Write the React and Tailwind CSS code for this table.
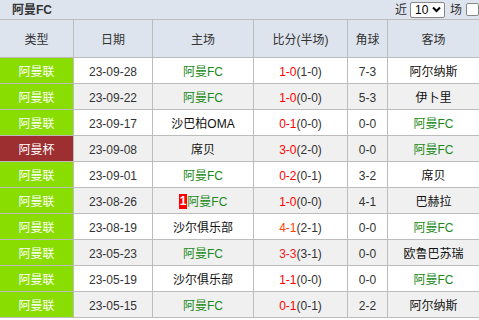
import React from "react";

const rows = [
  { type: "阿曼联", cup: false, date: "23-09-28", home: "阿曼FC", hg: true, s: "1-0", sc: "text-[#ff0000]", ht: "(1-0)", c: "7-3", away: "阿尔纳斯", ag: false },
  { type: "阿曼联", cup: false, date: "23-09-22", home: "阿曼FC", hg: true, s: "1-0", sc: "text-[#ff0000]", ht: "(0-0)", c: "5-3", away: "伊卜里", ag: false },
  { type: "阿曼联", cup: false, date: "23-09-17", home: "沙巴柏OMA", hg: false, s: "0-1", sc: "text-[#ff0000]", ht: "(0-0)", c: "0-0", away: "阿曼FC", ag: true },
  { type: "阿曼杯", cup: true, date: "23-09-08", home: "席贝", hg: false, s: "3-0", sc: "text-[#ff0000]", ht: "(2-0)", c: "0-0", away: "阿曼FC", ag: true },
  { type: "阿曼联", cup: false, date: "23-09-01", home: "阿曼FC", hg: true, s: "0-2", sc: "text-[#ff0000]", ht: "(0-1)", c: "3-2", away: "席贝", ag: false },
  { type: "阿曼联", cup: false, date: "23-08-26", home: "阿曼FC", hg: true, badge: true, s: "1-0", sc: "text-[#ff0000]", ht: "(0-0)", c: "4-1", away: "巴赫拉", ag: false },
  { type: "阿曼联", cup: false, date: "23-08-19", home: "沙尔俱乐部", hg: false, s: "4-1", sc: "text-[#ff4400]", ht: "(2-1)", c: "0-0", away: "阿曼FC", ag: true },
  { type: "阿曼联", cup: false, date: "23-05-23", home: "阿曼FC", hg: true, s: "3-3", sc: "text-[#ee2222]", ht: "(3-1)", c: "0-0", away: "欧鲁巴苏瑞", ag: false },
  { type: "阿曼联", cup: false, date: "23-05-19", home: "沙尔俱乐部", hg: false, s: "1-1", sc: "text-[#ff0000]", ht: "(0-0)", c: "0-0", away: "阿曼FC", ag: true },
  { type: "阿曼联", cup: false, date: "23-05-15", home: "阿曼FC", hg: true, s: "0-1", sc: "text-[#ff0000]", ht: "(0-1)", c: "2-2", away: "阿尔纳斯", ag: false },
];

const font = { fontFamily: '"Liberation Sans", "Noto Sans CJK SC", sans-serif' };

export default function App() {
  return (
    <div className="w-[479px] h-[320px] overflow-hidden bg-white text-[12px] text-[#333]" style={font}>
      <div className="h-[20px] bg-[#dde4ee] border-b border-[#bcbcbc] flex items-center justify-between">
        <span className="pl-[12px] font-bold text-[12px] text-[#333]">阿曼FC</span>
        <div className="flex items-center h-full">
          <span className="mr-[3px]">近</span>
          <div className="w-[35px] h-[16px] border border-[#888] rounded-[2px] bg-white flex items-center justify-between pl-[4px] pr-[3px] text-[#000]">
            <span>10</span>
            <svg width="9" height="7" viewBox="0 0 9 7"><path d="M1 1.5 L4.5 5 L8 1.5" stroke="#000" strokeWidth="2" fill="none" /></svg>
          </div>
          <span className="ml-[5px]">场</span>
          <div className="ml-[4px] w-[13px] h-[13px] border border-[#888] rounded-[2px] bg-white" />
        </div>
      </div>
      <div className="grid grid-cols-[74px_79px_101px_94px_40px_91px]">
        {["类型", "日期", "主场", "比分(半场)", "角球", "客场"].map((h, i) => (
          <div key={h} className={`h-[38px] pt-[2px] bg-[#dde4ee] border-b border-[#bcbcbc] flex items-center justify-center ${i < 5 ? "border-r" : ""}`}>
            {h}
          </div>
        ))}
        {rows.map((r, idx) => {
          const bg = idx % 2 === 0 ? "bg-white" : "bg-[#f0f0f0]";
          const cell = `h-[26px] pt-[2px] border-b border-r border-[#bcbcbc] flex items-center justify-center ${bg}`;
          return (
            <React.Fragment key={idx}>
              <div className={`h-[26px] pt-[2px] border-b border-r border-[#bcbcbc] flex items-center justify-center text-white ${r.cup ? "bg-[#9e2f30]" : "bg-[#8add00]"}`}>
                {r.type}
              </div>
              <div className={cell}>{r.date}</div>
              <div className={cell}>
                {r.badge && (
                  <span className="bg-[#ff0000] text-white font-bold text-[12px] leading-[15px] px-[1px]">1</span>
                )}
                <span className={r.hg ? "text-[#1a8a1a]" : "text-[#111]"}>{r.home}</span>
              </div>
              <div className={cell}>
                <span className={r.sc}>{r.s}</span>
                <span>{r.ht}</span>
              </div>
              <div className={cell}>{r.c}</div>
              <div className={`h-[26px] pt-[2px] border-b border-[#bcbcbc] flex items-center justify-center ${bg}`}>
                <span className={r.ag ? "text-[#1a8a1a]" : "text-[#111]"}>{r.away}</span>
              </div>
            </React.Fragment>
          );
        })}
      </div>
    </div>
  );
}
